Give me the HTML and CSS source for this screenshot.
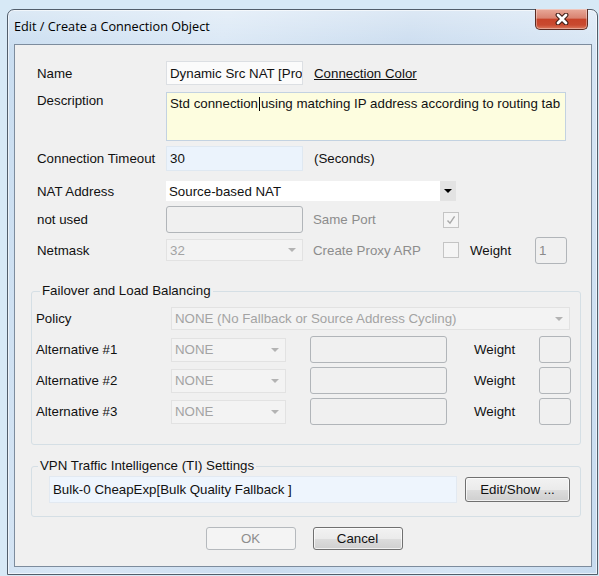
FILE: index.html
```html
<!DOCTYPE html>
<html lang="en">
<head>
<meta charset="utf-8">
<title>Edit / Create a Connection Object</title>
<link rel="stylesheet" href="styles.css">
</head>
<body>
<div class="window">
  <div class="titlebar">
    <span class="title">Edit / Create a Connection Object</span>
    <button class="close" type="button" aria-label="Close">
      <svg width="14" height="12" viewBox="0 0 14 12">
        <path d="M3 2 L11 10 M11 2 L3 10" stroke="#3b1a14" stroke-width="4.8" stroke-linecap="round"/>
        <path d="M3 2 L11 10 M11 2 L3 10" stroke="#ffffff" stroke-width="2.8" stroke-linecap="round"/>
      </svg>
    </button>
  </div>

  <div class="client">
    <div class="main">
      <div class="row r-name">
        <span class="lbl">Name</span>
        <span class="edit name-edit">Dynamic Src NAT [Pro</span>
        <span class="link">Connection Color</span>
      </div>

      <div class="row r-desc">
        <span class="lbl lbl-top">Description</span>
        <div class="edit desc-edit">Std connection<span class="caret"></span>using matching IP address according to routing tab</div>
      </div>

      <div class="row r-timeout">
        <span class="lbl">Connection Timeout</span>
        <span class="edit timeout-edit">30</span>
        <span class="unit">(Seconds)</span>
      </div>

      <div class="row r-nat">
        <span class="lbl">NAT Address</span>
        <span class="combo nat-combo">
          <span class="combo-text">Source-based NAT</span>
          <span class="combo-btn"><i class="tri"></i></span>
        </span>
      </div>

      <div class="row r-notused">
        <span class="lbl">not used</span>
        <span class="edit off short"></span>
        <span class="lbl-off">Same Port</span>
        <span class="check off">
          <svg width="12" height="12" viewBox="0 0 12 12"><path d="M2.5 6.5 L5 9.2 L9.6 2.4" fill="none" stroke="#a9a9a9" stroke-width="1.4"/></svg>
        </span>
      </div>

      <div class="row r-netmask">
        <span class="lbl">Netmask</span>
        <span class="combo off short"><span class="combo-text">32</span><i class="tri tri-off"></i></span>
        <span class="lbl-off">Create Proxy ARP</span>
        <span class="check off"></span>
        <span class="wlbl">Weight</span>
        <span class="edit off weight">1</span>
      </div>
    </div>

    <fieldset class="group g-fail">
      <legend>Failover and Load Balancing</legend>
      <div class="grow g-policy">
        <span class="glbl">Policy</span>
        <span class="combo off policy-combo"><span class="combo-text">NONE (No Fallback or Source Address Cycling)</span><i class="tri tri-off"></i></span>
      </div>
      <div class="grow g-alt">
        <span class="glbl">Alternative #1</span>
        <span class="combo off alt-combo"><span class="combo-text">NONE</span><i class="tri tri-off"></i></span>
        <span class="edit off alt-edit"></span>
        <span class="gw">Weight</span>
        <span class="edit off weight"></span>
      </div>
      <div class="grow g-alt">
        <span class="glbl">Alternative #2</span>
        <span class="combo off alt-combo"><span class="combo-text">NONE</span><i class="tri tri-off"></i></span>
        <span class="edit off alt-edit"></span>
        <span class="gw">Weight</span>
        <span class="edit off weight"></span>
      </div>
      <div class="grow g-alt">
        <span class="glbl">Alternative #3</span>
        <span class="combo off alt-combo"><span class="combo-text">NONE</span><i class="tri tri-off"></i></span>
        <span class="edit off alt-edit"></span>
        <span class="gw">Weight</span>
        <span class="edit off weight"></span>
      </div>
    </fieldset>

    <fieldset class="group g-vpn">
      <legend>VPN Traffic Intelligence (TI) Settings</legend>
      <div class="vpn-row">
        <span class="edit vpn-edit">Bulk-0 CheapExp[Bulk Quality Fallback ]</span>
        <button class="btn edit-show" type="button">Edit/Show ...</button>
      </div>
    </fieldset>

    <div class="actions">
      <button class="btn btn-off" type="button" disabled>OK</button>
      <button class="btn" type="button">Cancel</button>
    </div>
  </div>
</div>
</body>
</html>
```

FILE: styles.css
```css
* { box-sizing: border-box; }

html, body { margin: 0; padding: 0; }

body {
  width: 599px;
  height: 576px;
  overflow: hidden;
  background: #d7e9f6;
  font-family: "Liberation Sans", Arial, sans-serif;
  font-size: 13.3px;
  color: #111;
}

/* ---- window frame ---- */
.window {
  margin: 9px 0 0 7px;
  width: 591px;
  height: 566px;
  border: 1px solid #525e6b;
  border-radius: 7px 7px 0 0;
  padding: 0 5px 7px 6px;
  display: flex;
  flex-direction: column;
  background:
    linear-gradient(180deg, rgba(255,255,255,0.35) 0, rgba(255,255,255,0) 40px),
    linear-gradient(105deg, #c9ddf0 0%, #d9e7f5 30%, #cadcef 55%, #d6e5f4 80%, #c7dbef 100%);
  box-shadow: inset 0 0 0 1px rgba(255,255,255,0.6);
}

.titlebar {
  height: 34px;
  display: flex;
  align-items: flex-start;
}

.title {
  margin-top: 8px;
  font-family: "Open Sans", "Liberation Sans", sans-serif;
  font-size: 12.7px;
  line-height: 16px;
  color: #000;
}

.close {
  margin: -1px 4px 0 auto;
  width: 53px;
  height: 21px;
  padding: 0;
  border: 1px solid #5b2b22;
  border-top: 0;
  border-radius: 0 0 5px 5px;
  background: linear-gradient(180deg, #e8a999 0%, #d98371 45%, #c8442a 52%, #c94a30 80%, #dc7a5e 100%);
  box-shadow: inset 0 0 0 1px rgba(255,255,255,0.35);
  display: flex;
  align-items: center;
  justify-content: center;
}

.client {
  flex: 1;
  border: 1px solid #7d8c9d;
  background: #f0f0f0;
  padding-top: 16px;
}

/* ---- top form rows ---- */
.main { margin-left: 22px; }

.row {
  display: flex;
  align-items: center;
}

.lbl {
  width: 129px;
  flex: none;
  line-height: 15px;
}

.lbl-top { align-self: flex-start; padding-top: 1px; }

.r-name { height: 24px; }
.r-desc { margin-top: 7px; height: 49px; }
.r-timeout { margin-top: 5px; height: 25px; }
.r-nat { margin-top: 10px; height: 20px; }
.r-notused { margin-top: 5px; height: 27px; }
.r-netmask { margin-top: 6px; height: 22px; }

.edit {
  display: flex;
  align-items: center;
  height: 100%;
  flex: none;
  padding: 0 3px;
  border: 1px solid #dcdfe3;
  background: #fbfbfb;
  white-space: nowrap;
  overflow: hidden;
  line-height: 15px;
}

.name-edit { width: 137px; }

.link {
  margin-left: 11px;
  text-decoration: underline;
}

.desc-edit {
  display: block;
  width: 400px;
  padding-top: 3px;
  background: #fdfddf;
  border-color: #c3d2e1;
}

.caret {
  display: inline-block;
  width: 1px;
  height: 14px;
  margin: 0 1px 0 1px;
  vertical-align: -3px;
  background: #000;
}

.timeout-edit {
  width: 137px;
  background: #ebf3fc;
  border-color: #dfe8f1;
}

.unit { margin-left: 11px; }

/* combo boxes */
.combo {
  display: flex;
  align-items: center;
  height: 100%;
  flex: none;
  padding-left: 3px;
  background: #fff;
  white-space: nowrap;
  overflow: hidden;
}

.combo-text { flex: 1; overflow: hidden; }

.nat-combo { width: 290px; }

.combo-btn {
  width: 16px;
  height: 100%;
  display: flex;
  align-items: center;
  justify-content: center;
  background: #e3e3e3;
}

.tri {
  display: block;
  width: 0;
  height: 0;
  border-left: 4px solid transparent;
  border-right: 4px solid transparent;
  border-top: 4px solid #000;
}

.tri-off {
  margin: 0 6px 0 4px;
  border-top-color: #b3b3b3;
}

/* disabled look */
.off { color: #a3a3a3; }

.edit.off {
  border: 1px solid #b1b5b9;
  border-radius: 3px;
  background: #f0f0f0;
}

.combo.off {
  border: 1px solid #e2e2e2;
  background: #f3f3f3;
}

.short { width: 137px; }

.lbl-off {
  margin-left: 10px;
  width: 130px;
  flex: none;
  color: #8c8c8c;
}

.check {
  width: 16px;
  height: 16px;
  flex: none;
  border: 1px solid #c4c4c4;
  background: #f5f5f5;
  display: flex;
  align-items: center;
  justify-content: center;
}

.wlbl {
  margin-left: 11px;
  width: 65px;
  flex: none;
}

.weight {
  width: 32px;
  height: 27px;
  color: #8a8a8a;
}

/* ---- group boxes ---- */
.group {
  margin: 0 10px 0 16px;
  padding: 0 0 0 4px;
  border: 1px solid #d5dfe5;
  border-radius: 3px;
  min-width: 0;
}

.group legend {
  padding: 0 2px;
  line-height: 16px;
}

.g-fail {
  margin-top: 22px;
  padding-bottom: 19px;
}

.g-fail legend { margin-left: 4px; }

.grow {
  display: flex;
  align-items: center;
}

.glbl {
  width: 135px;
  flex: none;
}

.g-policy { margin-top: 8px; height: 23px; }
.policy-combo { width: 399px; }

.g-alt { margin-top: 4px; height: 27px; }
.g-policy + .g-alt { margin-top: 6px; }

.alt-combo { width: 115px; height: 24px; }

.alt-edit {
  margin-left: 24px;
  width: 137px;
}

.gw {
  margin-left: 27px;
  width: 65px;
  flex: none;
}

.g-vpn {
  margin-top: 13px;
  padding-bottom: 13px;
}

.g-vpn legend { margin-left: 2px; }

.vpn-row {
  margin-top: 2px;
  padding-left: 13px;
  display: flex;
  align-items: center;
  height: 27px;
}

.vpn-edit {
  width: 408px;
  background: #eef5fd;
  border-color: #e2e9f1;
}

/* ---- push buttons ---- */
.btn {
  height: 25px;
  padding: 0;
  font-family: "Liberation Sans", Arial, sans-serif;
  font-size: 13.3px;
  color: #111;
  border: 1px solid #707070;
  border-radius: 3px;
  background: linear-gradient(180deg, #f2f2f2 0%, #ebebeb 50%, #dddddd 51%, #cfcfcf 100%);
  box-shadow: inset 0 0 0 1px rgba(255,255,255,0.7);
}

.edit-show {
  margin-left: 8px;
  width: 105px;
}

.actions {
  margin-top: 10px;
  display: flex;
  justify-content: center;
  gap: 17px;
  padding-left: 2px;
}

.actions .btn {
  width: 90px;
  height: 23px;
}

.btn-off {
  color: #8d8d8d;
  border-color: #b5b9bd;
  background: #f4f4f4;
  box-shadow: none;
}
```
